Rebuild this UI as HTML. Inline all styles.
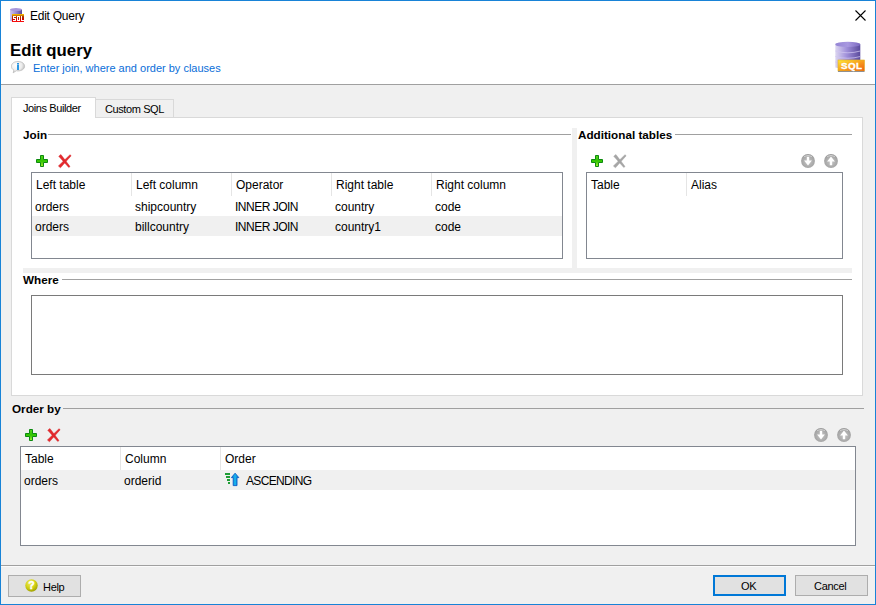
<!DOCTYPE html>
<html><head><meta charset="utf-8">
<style>
*{margin:0;padding:0;box-sizing:border-box}
html,body{width:876px;height:605px;overflow:hidden;background:#f0f0f0}
body{position:relative;font-family:"Liberation Sans",sans-serif;font-size:11px;color:#000}
.a{position:absolute}
.t{position:absolute;white-space:nowrap;line-height:14px}
.b{font-weight:bold}
.ln{position:absolute;height:1px;background:#a0a0a0}
.grid{position:absolute;border:1px solid #828790;background:#fff}
.hd{position:absolute;width:1px;background:#e5e5e5}
.btn{position:absolute;background:#e1e1e1;border:1px solid #adadad}
</style></head><body>
<svg width="0" height="0" style="position:absolute">
 <defs>
  <linearGradient id="gp" x1="0" y1="0" x2="0" y2="1"><stop offset="0" stop-color="#5ad41c"/><stop offset=".5" stop-color="#2ec400"/><stop offset="1" stop-color="#a8f030"/></linearGradient>
  <radialGradient id="gc" cx=".5" cy=".55" r=".6"><stop offset="0" stop-color="#c6c6c6"/><stop offset=".75" stop-color="#a6a6a6"/><stop offset="1" stop-color="#8e8e8e"/></radialGradient>
 </defs>
</svg>
<!-- title bar + header (white) -->
<div class="a" style="left:0;top:0;width:876px;height:85px;background:#fff"></div>
<div class="a" style="left:1px;top:84px;width:874px;height:1px;background:#a0a0a0"></div>

<!-- title icon -->
<svg class="a" style="left:10px;top:8px" width="15" height="15" viewBox="0 0 15 15">
 <defs><linearGradient id="cy" x1="0" x2="1"><stop offset="0" stop-color="#d0c8ee"/><stop offset=".5" stop-color="#9a88d4"/><stop offset="1" stop-color="#584898"/></linearGradient>
 <linearGradient id="tl" x1="0" y1="0" x2="0" y2="1"><stop offset="0" stop-color="#ffd000"/><stop offset=".35" stop-color="#a83000"/><stop offset=".7" stop-color="#d00000"/><stop offset="1" stop-color="#ff1010"/></linearGradient></defs>
 <path d="M0 1.5V13Q6 14 12 13V1.5Z" fill="url(#cy)"/>
 <ellipse cx="6" cy="1.6" rx="6" ry="1.5" fill="#a898dc"/>
 <rect x="2" y="6" width="12" height="8" fill="url(#tl)"/>
 <g fill="#fff"><rect x="3" y="8" width="3" height="1"/><rect x="3" y="9" width="1" height="1"/><rect x="3" y="10" width="3" height="1"/><rect x="5" y="11" width="1" height="1"/><rect x="3" y="12" width="3" height="1"/><rect x="7" y="8" width="3" height="1"/><rect x="7" y="9" width="1" height="3"/><rect x="9" y="9" width="1" height="3"/><rect x="7" y="12" width="3" height="1"/><rect x="11" y="8" width="1" height="4"/><rect x="11" y="12" width="3" height="1"/></g>
</svg>
<div class="t" style="left:30px;top:9px;font-size:12px;letter-spacing:-0.25px">Edit Query</div>
<!-- close X -->
<svg class="a" style="left:855px;top:10px" width="11" height="11" viewBox="0 0 11 11"><path d="M0.5 0.5L10.5 10.5M10.5 0.5L0.5 10.5" stroke="#000" stroke-width="1.1"/></svg>

<!-- header -->
<div class="t b" style="left:10px;top:41px;font-size:16.8px;line-height:19px">Edit query</div>
<svg class="a" style="left:11px;top:61px" width="15" height="13" viewBox="0 0 15 13">
 <defs><radialGradient id="bub" cx=".35" cy=".35" r=".75"><stop offset="0" stop-color="#fff"/><stop offset=".6" stop-color="#ececec"/><stop offset="1" stop-color="#a8a8a8"/></radialGradient></defs>
 <path d="M7 0.5C10.8 0.5 13.6 2.5 13.6 5.2C13.6 7.9 10.8 9.9 7 9.9C6.4 9.9 5.8 9.9 5.3 9.7L2.2 11.8L2.9 9.1C1.3 8.3 0.4 6.9 0.4 5.2C0.4 2.5 3.2 0.5 7 0.5Z" fill="url(#bub)" stroke="#bdbdbd" stroke-width="0.8"/>
 <rect x="6" y="4" width="2" height="5" fill="#2a96e2"/><rect x="6" y="2" width="2" height="1.6" fill="#2a96e2"/>
</svg>
<div class="t" style="left:33px;top:61px;color:#0a6ed8">Enter join, where and order by clauses</div>
<!-- SQL icon -->
<svg class="a" style="left:834px;top:40px" width="34" height="34" viewBox="0 0 34 34">
 <defs>
  <linearGradient id="cyl" x1="0" x2="1"><stop offset="0" stop-color="#dcd6f0"/><stop offset=".45" stop-color="#a090da"/><stop offset="1" stop-color="#5a4a9c"/></linearGradient>
  <linearGradient id="cyt" x1="0" x2="1"><stop offset="0" stop-color="#9484d4"/><stop offset=".5" stop-color="#a898e0"/><stop offset="1" stop-color="#7a68c0"/></linearGradient>
  <linearGradient id="sq" x1="0" y1="0" x2="1" y2="1"><stop offset="0" stop-color="#ffe838"/><stop offset=".45" stop-color="#f8a820"/><stop offset="1" stop-color="#f05a10"/></linearGradient>
 </defs>
 <path d="M1.3 4.5V27.5Q13.6 31 26.3 27.5V4.5Z" fill="url(#cyl)"/>
 <ellipse cx="13.8" cy="4.4" rx="12.5" ry="2.6" fill="url(#cyt)"/>
 <path d="M1.3 11Q13.8 14.6 26.3 11M1.3 16.5Q13.8 20 26.3 16.5M1.3 22Q13.8 25.5 26.3 22" stroke="#cfc4f0" stroke-width="1" fill="none" opacity=".75"/>
 <rect x="4" y="20" width="26.5" height="11" fill="url(#sq)" stroke="#e0b020" stroke-width="0.6"/>
 <rect x="4" y="31" width="26.5" height="1" fill="#909090"/>
 <text x="7" y="28.9" font-family="Liberation Sans" font-weight="bold" font-size="9.8" fill="#fff" stroke="#fff" stroke-width=".35" letter-spacing=".4">SQL</text>
</svg>

<!-- tabs -->
<div class="a" style="left:95px;top:99px;width:79px;height:19px;background:#f0f0f0;border:1px solid #d9d9d9;border-bottom:none"></div>
<div class="t" style="left:105px;top:102px;letter-spacing:-0.4px">Custom SQL</div>
<div class="a" style="left:11px;top:117px;width:852px;height:279px;background:#fff;border:1px solid #d9d9d9"></div>
<div class="a" style="left:11px;top:97px;width:85px;height:21px;background:#fff;border:1px solid #d9d9d9;border-bottom:none"></div>
<div class="t" style="left:23px;top:101px;letter-spacing:-0.4px">Joins Builder</div>

<!-- Join group -->
<div class="t b" style="left:23px;top:128px;font-size:11.7px">Join</div>
<div class="ln" style="left:48px;top:134px;width:523px"></div>
<svg class="a" style="left:36px;top:155px" width="12" height="12" viewBox="0 0 12 12"><path d="M4.5 0.5H7.5V4.5H11.5V7.5H7.5V11.5H4.5V7.5H0.5V4.5H4.5Z" fill="url(#gp)" stroke="#0c8a10" stroke-width="1"/></svg>
<svg class="a" style="left:55px;top:151px" width="20" height="20" viewBox="0 0 20 20"><path d="M3.72 5.29 L13.78 16.51 L15.02 15.49 L5.88 3.51Z" fill="#e42a2e" stroke="#d0161c" stroke-width=".4" stroke-linejoin="round"/><path d="M15.02 3.65 L3.39 14.93 L5.41 16.87 L16.18 4.75Z" fill="#e42a2e" stroke="#d0161c" stroke-width=".4" stroke-linejoin="round"/></svg>
<div class="grid" style="left:31px;top:172px;width:532px;height:87px">
 <div class="hd" style="left:99px;top:0;height:23px"></div><div class="hd" style="left:199px;top:0;height:23px"></div><div class="hd" style="left:299px;top:0;height:23px"></div><div class="hd" style="left:399px;top:0;height:23px"></div>
 <div class="a" style="left:0;top:43px;width:530px;height:20px;background:#f0f0f0"></div>
</div>

<!-- splitters -->
<div class="a" style="left:572px;top:128px;width:5px;height:140px;background:#f0f0f0"></div>
<div class="a" style="left:23px;top:268px;width:829px;height:5px;background:#f0f0f0"></div>

<!-- Additional tables -->
<div class="t b" style="left:578px;top:128px;font-size:11.7px">Additional tables</div>
<div class="ln" style="left:675px;top:134px;width:177px"></div>
<svg class="a" style="left:591px;top:155px" width="12" height="12" viewBox="0 0 12 12"><path d="M4.5 0.5H7.5V4.5H11.5V7.5H7.5V11.5H4.5V7.5H0.5V4.5H4.5Z" fill="url(#gp)" stroke="#0c8a10" stroke-width="1"/></svg>
<svg class="a" style="left:610px;top:151px" width="20" height="20" viewBox="0 0 20 20"><path d="M3.72 5.29 L13.78 16.51 L15.02 15.49 L5.88 3.51Z" fill="#a6a6a6" stroke="#9a9a9a" stroke-width=".4" stroke-linejoin="round"/><path d="M15.02 3.65 L3.39 14.93 L5.41 16.87 L16.18 4.75Z" fill="#a6a6a6" stroke="#9a9a9a" stroke-width=".4" stroke-linejoin="round"/></svg>
<svg class="a" style="left:801px;top:154px" width="14" height="14" viewBox="0 0 14 14"><circle cx="7" cy="7" r="6.9" fill="url(#gc)"/><path d="M3 2.6Q7 0.2 11 2.6" fill="none" stroke="#dcdcdc" stroke-width=".9" opacity=".8"/><path d="M5.8 2.7H8.2V6.6H10.9L7 11.4L3.1 6.6H5.8Z" fill="#fff"/></svg>
<svg class="a" style="left:824px;top:154px" width="14" height="14" viewBox="0 0 14 14"><circle cx="7" cy="7" r="6.9" fill="url(#gc)"/><path d="M3 2.6Q7 0.2 11 2.6" fill="none" stroke="#dcdcdc" stroke-width=".9" opacity=".8"/><path d="M7 2.6L10.9 7.4H8.2V11.3H5.8V7.4H3.1Z" fill="#fff"/></svg>
<div class="grid" style="left:586px;top:172px;width:257px;height:87px">
 <div class="hd" style="left:99px;top:0;height:23px"></div>
</div>

<!-- Where -->
<div class="t b" style="left:23px;top:273px;font-size:11.7px">Where</div>
<div class="ln" style="left:62px;top:279px;width:790px"></div>
<div class="a" style="left:31px;top:295px;width:812px;height:80px;background:#fff;border:1px solid #7a7a7a"></div>

<!-- Order by -->
<div class="t b" style="left:12px;top:402px;font-size:11.7px">Order by</div>
<div class="ln" style="left:63px;top:408px;width:801px"></div>
<svg class="a" style="left:25px;top:429px" width="12" height="12" viewBox="0 0 12 12"><path d="M4.5 0.5H7.5V4.5H11.5V7.5H7.5V11.5H4.5V7.5H0.5V4.5H4.5Z" fill="url(#gp)" stroke="#0c8a10" stroke-width="1"/></svg>
<svg class="a" style="left:44px;top:425px" width="20" height="20" viewBox="0 0 20 20"><path d="M3.72 5.29 L13.78 16.51 L15.02 15.49 L5.88 3.51Z" fill="#e42a2e" stroke="#d0161c" stroke-width=".4" stroke-linejoin="round"/><path d="M15.02 3.65 L3.39 14.93 L5.41 16.87 L16.18 4.75Z" fill="#e42a2e" stroke="#d0161c" stroke-width=".4" stroke-linejoin="round"/></svg>
<svg class="a" style="left:814px;top:428px" width="14" height="14" viewBox="0 0 14 14"><circle cx="7" cy="7" r="6.9" fill="url(#gc)"/><path d="M3 2.6Q7 0.2 11 2.6" fill="none" stroke="#dcdcdc" stroke-width=".9" opacity=".8"/><path d="M5.8 2.7H8.2V6.6H10.9L7 11.4L3.1 6.6H5.8Z" fill="#fff"/></svg>
<svg class="a" style="left:837px;top:428px" width="14" height="14" viewBox="0 0 14 14"><circle cx="7" cy="7" r="6.9" fill="url(#gc)"/><path d="M3 2.6Q7 0.2 11 2.6" fill="none" stroke="#dcdcdc" stroke-width=".9" opacity=".8"/><path d="M7 2.6L10.9 7.4H8.2V11.3H5.8V7.4H3.1Z" fill="#fff"/></svg>
<div class="grid" style="left:20px;top:446px;width:836px;height:100px">
 <div class="hd" style="left:99px;top:0;height:23px"></div><div class="hd" style="left:199px;top:0;height:23px"></div>
 <div class="a" style="left:0;top:23px;width:834px;height:20px;background:#f0f0f0"></div>
</div>
<svg class="a" style="left:222px;top:470px" width="20" height="20" viewBox="0 0 20 20">
 <defs><linearGradient id="gb" x1="0" x2="1"><stop offset="0" stop-color="#0a66cc"/><stop offset=".5" stop-color="#18b8ee"/><stop offset="1" stop-color="#0a66cc"/></linearGradient>
 <linearGradient id="gg" x1="0" y1="0" x2="0" y2="1"><stop offset="0" stop-color="#0e8a2c"/><stop offset=".5" stop-color="#30b040"/><stop offset="1" stop-color="#0e8a2c"/></linearGradient></defs>
 <rect x="3" y="3" width="5" height="2" fill="url(#gg)"/><rect x="4" y="6" width="4" height="2" fill="url(#gg)"/><rect x="5" y="9" width="3" height="2" fill="url(#gg)"/><rect x="6" y="12" width="2" height="2" fill="url(#gg)"/>
 <path d="M13.1 3.2L16.8 7.6H15V15.6H11.2V7.6H9.4Z" fill="url(#gb)" stroke="#0a5cc6" stroke-width=".9" stroke-linejoin="round"/>
</svg>
<div class="t" style="left:36px;top:178px;font-size:12px;">Left table</div>
<div class="t" style="left:136px;top:178px;font-size:12px;">Left column</div>
<div class="t" style="left:236px;top:178px;font-size:12px;">Operator</div>
<div class="t" style="left:336px;top:178px;font-size:12px;">Right table</div>
<div class="t" style="left:436px;top:178px;font-size:12px;">Right column</div>
<div class="t" style="left:35px;top:200px;font-size:12px;">orders</div>
<div class="t" style="left:135px;top:200px;font-size:12px;">shipcountry</div>
<div class="t" style="left:235px;top:200px;font-size:12px;letter-spacing:-0.5px;">INNER JOIN</div>
<div class="t" style="left:335px;top:200px;font-size:12px;">country</div>
<div class="t" style="left:435px;top:200px;font-size:12px;">code</div>
<div class="t" style="left:35px;top:220px;font-size:12px;">orders</div>
<div class="t" style="left:135px;top:220px;font-size:12px;">billcountry</div>
<div class="t" style="left:235px;top:220px;font-size:12px;letter-spacing:-0.5px;">INNER JOIN</div>
<div class="t" style="left:335px;top:220px;font-size:12px;">country1</div>
<div class="t" style="left:435px;top:220px;font-size:12px;">code</div>
<div class="t" style="left:591px;top:178px;font-size:12px;">Table</div>
<div class="t" style="left:691px;top:178px;font-size:12px;">Alias</div>
<div class="t" style="left:25px;top:452px;font-size:12px;">Table</div>
<div class="t" style="left:125px;top:452px;font-size:12px;">Column</div>
<div class="t" style="left:225px;top:452px;font-size:12px;">Order</div>
<div class="t" style="left:24px;top:474px;font-size:12px;">orders</div>
<div class="t" style="left:124px;top:474px;font-size:12px;">orderid</div>
<div class="t" style="left:246px;top:474px;font-size:12px;letter-spacing:-0.65px;">ASCENDING</div>

<!-- bottom -->
<div class="a" style="left:1px;top:565px;width:874px;height:1px;background:#a0a0a0"></div>
<div class="a" style="left:1px;top:566px;width:874px;height:1px;background:#fbfbfb"></div>
<div class="btn" style="left:8px;top:575px;width:73px;height:22px"></div>
<svg class="a" style="left:25px;top:579px" width="13" height="13" viewBox="0 0 13 13">
 <defs><radialGradient id="gy" cx=".4" cy=".3" r=".75"><stop offset="0" stop-color="#f4f060"/><stop offset=".6" stop-color="#cccc10"/><stop offset="1" stop-color="#9a9a00"/></radialGradient></defs>
 <circle cx="6.5" cy="6.5" r="6.2" fill="url(#gy)"/>
 <text x="3.3" y="10.4" font-family="Liberation Sans" font-weight="bold" font-size="10.5" fill="#fff" stroke="#fff" stroke-width=".4">?</text>
</svg>
<div class="t" style="left:43px;top:580px;letter-spacing:-0.3px">Help</div>
<div class="btn" style="left:713px;top:575px;width:73px;height:21px;border:2px solid #0078d7"></div>
<div class="t" style="left:741px;top:579px;letter-spacing:-0.3px">OK</div>
<div class="btn" style="left:795px;top:575px;width:73px;height:21px"></div>
<div class="t" style="left:814px;top:579px;letter-spacing:-0.3px">Cancel</div>
<!-- window border -->
<div class="a" style="left:0;top:0;width:876px;height:605px;border:1px solid #1883d7"></div>
</body></html>
